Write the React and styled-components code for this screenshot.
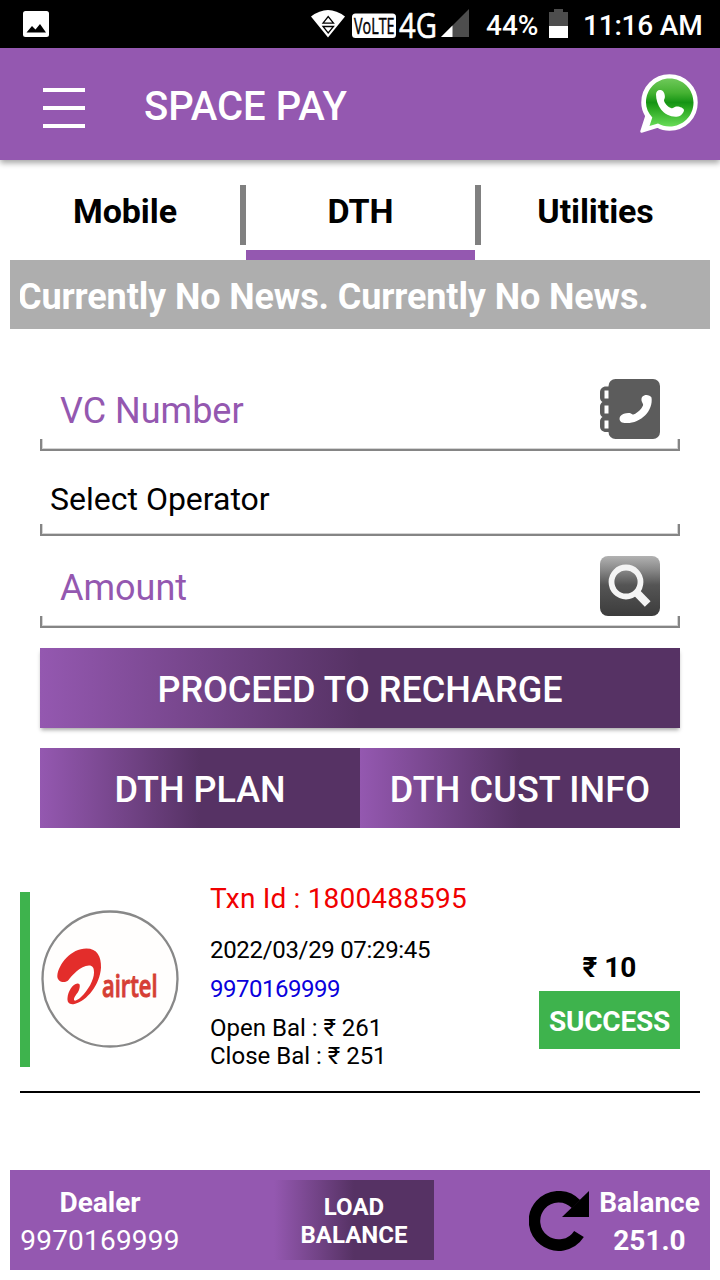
import * as React from 'react';
import styled, { createGlobalStyle } from 'styled-components';

const purple = '#9458b0';
const dark = '#563264';
const green = '#3eb34d';

const GlobalStyle = createGlobalStyle`
  * {
    box-sizing: border-box;
  }

  body {
    margin: 0;
    background: #fff;
    font-family: Roboto, 'Noto Sans', sans-serif;
    color: #000;
  }

  svg {
    display: block;
    flex: none;
  }
`;

const Screen = styled.div`
  width: 720px;
  height: 1280px;
  display: flex;
  flex-direction: column;
  overflow: hidden;
  background: #fff;
`;

const StatusBar = styled.div`
  height: 48px;
  flex: none;
  display: flex;
  justify-content: space-between;
  padding: 0 17px 0 23px;
  background: #000;
`;

const StatusGroup = styled.div`
  display: flex;
`;

const StatusText = styled.span`
  width: ${(props) => props.$width}px;
  line-height: 51px;
  font-size: 28px;
  font-weight: 500;
  letter-spacing: ${(props) => props.$spacing || 0}px;
  white-space: nowrap;
  color: #fff;
`;

const Header = styled.header`
  height: 112px;
  flex: none;
  display: flex;
  padding: 0 20px 0 43px;
  background: ${purple};
  box-shadow: 0 3px 6px rgba(0, 0, 0, 0.36);
`;

const Burger = styled.div`
  width: 42px;
  margin: 40px 59px 0 0;
  display: flex;
  flex-direction: column;
  gap: 14px;

  > span {
    height: 4px;
    background: #fff;
  }
`;

const Title = styled.h1`
  flex: 1;
  margin: 0;
  font-size: 40px;
  font-weight: 500;
  line-height: 118px;
  color: #fff;
`;

const Tabs = styled.nav`
  height: 75px;
  flex: none;
  margin: 25px 10px 0;
  display: grid;
  grid-template-columns: 230px 6px 229px 6px 229px;
`;

const Tab = styled.div`
  text-align: center;
  font-size: 34px;
  font-weight: 700;
  line-height: 53px;
  letter-spacing: -0.1px;
  border-bottom: 10px solid ${(props) => (props.$active ? purple : 'transparent')};
`;

const TabDivider = styled.div`
  height: 60px;
  background: #808080;
`;

const News = styled.div`
  height: 69px;
  flex: none;
  margin: 0 10px;
  padding: 0 10px;
  background: #aeaeae;
`;

const NewsText = styled.div`
  overflow: hidden;
  white-space: nowrap;
  font-size: 36px;
  font-weight: 700;
  line-height: 75px;
  letter-spacing: -0.12px;
  text-indent: -2px;
  color: #fff;
`;

const Form = styled.div`
  padding: 50px 40px 0;
`;

const Field = styled.div`
  height: ${(props) => props.$height}px;
  margin-top: ${(props) => props.$gap || 0}px;
  display: flex;
  flex-direction: column;
`;

const FieldRow = styled.div`
  flex: 1;
  display: flex;
  justify-content: space-between;
  align-items: center;
  padding: 0 20px 0 ${(props) => (props.$select ? 10 : 20)}px;
  font-size: ${(props) => (props.$select ? 32 : 36)}px;
  color: ${(props) => (props.$select ? '#000' : purple)};
`;

const FieldLabel = styled.span`
  padding-top: ${(props) => props.$top || 0}px;
`;

const FieldEdge = styled.div`
  height: 12px;
  border: 2px solid #858585;
  border-top: 0;
  box-shadow: inset 1px -1px 0 #d4d4d4, inset -1px 0 0 #d4d4d4;
`;

const Button = styled.button`
  height: 80px;
  flex: 1;
  padding: 4px 0 0;
  border: 0;
  font-family: inherit;
  font-size: 36px;
  font-weight: 500;
  letter-spacing: ${(props) => props.$spacing || 0}px;
  color: #fff;
  background: linear-gradient(90deg, ${purple} 0%, ${dark} 50%);
`;

const MainButton = styled(Button)`
  display: block;
  width: 100%;
  margin-top: 20px;
  box-shadow: 0 3px 4px -1px rgba(0, 0, 0, 0.35);
`;

const ButtonRow = styled.div`
  display: flex;
  margin-top: 20px;
`;

const Transaction = styled.div`
  height: 213px;
  flex: none;
  margin: 52px 20px 0;
  padding-top: 12px;
  display: flex;
  border-bottom: 2px solid #000;
`;

const StatusStripe = styled.div`
  width: 10px;
  height: 175px;
  background: ${green};
`;

const Logo = styled.div`
  width: 140px;
  margin: 17px 30px 0 10px;
`;

const Details = styled.div`
  flex: 1;
  margin-top: -7px;
  font-size: 24px;
  line-height: 28px;
`;

const Line = styled.div`
  margin-bottom: ${(props) => props.$after || 0}px;
  color: ${(props) => props.$color || '#000'};
  font-size: ${(props) => props.$size || 24}px;
  letter-spacing: ${(props) => props.$spacing || 0}px;
`;

const Result = styled.div`
  width: 141px;
  margin-right: 20px;
  padding-top: 59px;
  text-align: center;
  font-size: 28px;
  font-weight: 700;
`;

const Price = styled.div`
  line-height: 33px;
`;

const Badge = styled.div`
  height: 58px;
  margin-top: 7px;
  line-height: 61px;
  letter-spacing: -0.25px;
  color: #fff;
  background: ${green};
`;

const Footer = styled.footer`
  height: 100px;
  flex: none;
  margin: 77px 10px 0;
  padding: 10px;
  display: flex;
  background: ${purple};
`;

const FooterColumn = styled.div`
  width: ${(props) => props.$width}px;
  padding-top: 4px;
  text-align: center;
  font-size: 28px;
  line-height: 38px;
  font-weight: 700;
  white-space: nowrap;
  color: #fff;
`;

const DealerNumber = styled.div`
  font-weight: 400;
  letter-spacing: 0.2px;
`;

const LoadButton = styled(Button)`
  flex: none;
  width: 160px;
  margin: 0 95px 0 94px;
  padding: 2px 0 0;
  font-size: 24px;
  font-weight: 700;
  line-height: 28px;
`;

const RefreshSlot = styled.div`
  padding: 11px 10px 0 0;
`;

const PictureIcon = () => (
  <svg width="26" height="48" viewBox="0 0 26 48">
    <rect y="11" width="26" height="26" rx="2.500" fill="#fff" />
    <path d="M3.500 32.500 9 26l3.500 3.500L17 24l6 8.500z" fill="#000" />
  </svg>
);

const NetworkIcons = () => (
  <svg width="176" height="48" viewBox="310 0 176 48">
    <path d="M311 16.500Q328 3.500 345 16.500L328 37.500z" fill="#fff" />
    <path d="M323 23.200h10.500L328.200 16.500zM323 26.500h10.500l-5.300 6.500z" fill="none" stroke="#000" strokeWidth="1.300" />
    <rect x="352" y="13.500" width="44" height="24.500" rx="3.500" fill="#fff" />
    <text x="354" y="34" fontFamily="Open Sans" fontSize="22" fontWeight="500" textLength="40.500" lengthAdjust="spacingAndGlyphs" fill="#000" stroke="#000" strokeWidth="0.500">VoLTE</text>
    <text x="399" y="37.500" fontFamily="Open Sans" fontSize="35" textLength="38" lengthAdjust="spacingAndGlyphs" fill="#fff" stroke="#fff" strokeWidth="0.600">4G</text>
    <path d="M441 37 469 9v28z" fill="#4d4d4d" />
    <path d="M441 37 452.500 25.500V37z" fill="#fff" />
  </svg>
);

const BatteryIcon = () => (
  <svg width="34" height="48" viewBox="549 0 34 48">
    <path d="M549 12h5V9h9v3h5v14h-19z" fill="#4d4d4d" />
    <path d="M549 26h19v12h-19z" fill="#fff" />
  </svg>
);

const WhatsAppIcon = () => (
  <svg width="60" height="112" viewBox="640 48 60 112">
    <defs>
      <linearGradient id="wa" x1="0" y1="0" x2="0" y2="1">
        <stop offset="0" stopColor="#6fc95a" />
        <stop offset="0.3" stopColor="#45b232" />
        <stop offset="0.5" stopColor="#159414" />
        <stop offset="0.6" stopColor="#25a31d" />
        <stop offset="1" stopColor="#69dc58" />
      </linearGradient>
    </defs>
    <path
      d="M669.500 75.500c15.200 0 27 12 27 27s-11.800 27-27 27c-4.500 0-8.500-1-12-3L641.500 131.500l5-15.500c-2.500-4-4-8.500-4-13.500 0-15 11.800-27 27-27z"
      fill="#fff"
      stroke="#fff"
      strokeWidth="2.500"
      strokeLinejoin="round"
    />
    <path
      d="M669.500 78.500c13.500 0 24 10.700 24 24s-10.500 24-24 24c-4.500 0-8-1-11.500-3l-8.500 2.500 2.800-8.500c-4-4.500-6.300-9.500-6.300-15 0-13.300 10.500-24 23.500-24z"
      fill="url(#wa)"
    />
    <path
      d="M656 94.500c0-3 2-4.800 4.500-4.500 3 .4 4.500 4 4.400 7-.1 2-1.200 2.700-.8 4 1 3 4.500 6.500 7.400 7.200 1.800.4 2.500-1.400 4.500-1.700 3-.5 8 1.500 8 3.500 0 2.700-3 6-6 6.500-6.500 1-13-2-17-7-3-4-5-10-5-15z"
      fill="#fff"
    />
  </svg>
);

const ContactIcon = () => (
  <svg width="60" height="60" viewBox="0 0 60 60">
    <path d="M6 7.500h5V53H6c-3.500 0-6-2.500-6-5.500v-5c0-2 1-3.500 2.500-4.500C1 37 0 35.500 0 33.500v-6C0 25.500 1 24 2.500 23 1 22 0 20.500 0 18.500v-5C0 10 2.500 7.500 6 7.500z" fill="#5c5c5c" />
    <path d="M4.500 11.500H9v8H4.500zM4.500 26.500H9v8H4.500zM4.500 41.500H9v8H4.500z" fill="#fff" />
    <rect x="8.500" width="51.500" height="60" rx="7" fill="#5c5c5c" />
    <path
      d="M42.500 17.500c2-2.500 7.500-2 9 1 1 6-1.500 13-6 17.500C39 42.500 30 45.500 22 43.500c-2.500-1-3.200-4.500-1.500-6.500 2-2.500 7.500-3.500 10.500-2.500 1.500.7 1.500 1.500 3 .8 3.500-1.500 7.500-5.300 9-8.800.5-1.500-.5-2-1.200-4-.6-1.800-.5-3.800.7-5z"
      fill="#fff"
    />
  </svg>
);

const SearchIcon = () => (
  <svg width="60" height="60" viewBox="0 0 60 60">
    <defs>
      <linearGradient id="search" x1="0" y1="0" x2="0" y2="1">
        <stop offset="0" stopColor="#b2b2b2" />
        <stop offset="0.25" stopColor="#858585" />
        <stop offset="0.48" stopColor="#555" />
        <stop offset="1" stopColor="#3c3c3c" />
      </linearGradient>
    </defs>
    <rect width="60" height="60" rx="8" fill="url(#search)" />
    <circle cx="26" cy="26" r="14.500" fill="none" stroke="#f4f4f4" strokeWidth="5.800" />
    <path d="m36 36 4 4" stroke="#f4f4f4" strokeWidth="6" />
    <path d="M37.500 37.500 47.700 48" stroke="#f4f4f4" strokeWidth="8" />
  </svg>
);

const AirtelLogo = () => (
  <svg width="140" height="140" viewBox="40 909 140 140">
    <circle cx="110" cy="979" r="67.500" fill="#fffefd" stroke="#888" strokeWidth="2.300" />
    <path
      d="M57.300 976c1-12 14-27.500 29-27.500 11 0 15 8 14.700 19-1 17-14 33.500-26.500 36.500-5 1-7.500-1.500-7-6 .5-6.500 5-14 10-14.500 3-.2 2.700 3.500 1.300 7-2 4-4.800 6-4.800 9 0 2.500 4 .5 7-2.500 7-6.500 13-17 13-24.500 0-5-1.500-7-5-7-8.500 0-17.500 10.500-20.500 14.500-3.500 4-11.500 2-11.200-4z"
      fill="#e32d2b"
    />
    <text x="102" y="997" fontFamily="Open Sans" fontSize="31" fontWeight="600" textLength="55.500" lengthAdjust="spacingAndGlyphs" fill="#d63e35" stroke="#d63e35" strokeWidth="1">airtel</text>
  </svg>
);

const RefreshIcon = () => (
  <svg width="60" height="60" viewBox="0 0 60 60">
    <path d="M50 43A24.200 24.200 0 1 1 47 13" fill="none" stroke="#000" strokeWidth="11.500" />
    <path d="M60 0v26H33z" fill="#000" />
  </svg>
);

const App = () => {
  return (
    <Screen>
      <GlobalStyle />
      <StatusBar>
        <PictureIcon />
        <StatusGroup>
          <NetworkIcons />
          <StatusText $width={63}>44%</StatusText>
          <BatteryIcon />
          <StatusText $width={120} $spacing={-0.2}>11:16 AM</StatusText>
        </StatusGroup>
      </StatusBar>
      <Header>
        <Burger>
          <span />
          <span />
          <span />
        </Burger>
        <Title>SPACE PAY</Title>
        <WhatsAppIcon />
      </Header>
      <Tabs>
        <Tab>Mobile</Tab>
        <TabDivider />
        <Tab $active>DTH</Tab>
        <TabDivider />
        <Tab>Utilities</Tab>
      </Tabs>
      <News>
        <NewsText>Currently No News. Currently No News.</NewsText>
      </News>
      <Form>
        <Field $height={72}>
          <FieldRow>
            <FieldLabel $top={4}>VC Number</FieldLabel>
            <ContactIcon />
          </FieldRow>
          <FieldEdge />
        </Field>
        <Field $height={85}>
          <FieldRow $select>
            <FieldLabel $top={23}>Select Operator</FieldLabel>
          </FieldRow>
          <FieldEdge />
        </Field>
        <Field $height={72} $gap={20}>
          <FieldRow>
            <FieldLabel $top={4}>Amount</FieldLabel>
            <SearchIcon />
          </FieldRow>
          <FieldEdge />
        </Field>
        <MainButton>PROCEED TO RECHARGE</MainButton>
        <ButtonRow>
          <Button>DTH PLAN</Button>
          <Button $spacing={0.15}>DTH CUST INFO</Button>
        </ButtonRow>
      </Form>
      <Transaction>
        <StatusStripe />
        <Logo>
          <AirtelLogo />
        </Logo>
        <Details>
          <Line $size={28} $color="#f00000" $spacing={0.18} $after={23}>Txn Id : 1800488595</Line>
          <Line $spacing={-0.32} $after={11}>2022/03/29 07:29:45</Line>
          <Line $color="#0a00dc" $spacing={-0.5} $after={11}>9970169999</Line>
          <Line>Open Bal : ₹ 261</Line>
          <Line>Close Bal : ₹ 251</Line>
        </Details>
        <Result>
          <Price>₹ 10</Price>
          <Badge>SUCCESS</Badge>
        </Result>
      </Transaction>
      <Footer>
        <FooterColumn $width={160}>
          <div>Dealer</div>
          <DealerNumber>9970169999</DealerNumber>
        </FooterColumn>
        <LoadButton>
          LOAD
          <br />
          BALANCE
        </LoadButton>
        <RefreshSlot>
          <RefreshIcon />
        </RefreshSlot>
        <FooterColumn $width={101}>
          <div>Balance</div>
          <div>251.0</div>
        </FooterColumn>
      </Footer>
    </Screen>
  );
};

export default App;
